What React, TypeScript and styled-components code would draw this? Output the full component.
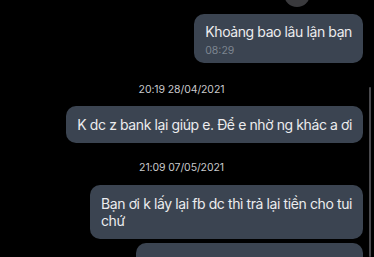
import styled, { createGlobalStyle } from 'styled-components'

const GlobalStyle = createGlobalStyle`
  html, body {
    margin: 0;
    padding: 0;
    background: #000;
    overflow: hidden;
  }
  body {
    font-family: Inter, "Liberation Sans", sans-serif;
    -webkit-font-smoothing: antialiased;
  }
`

type Item =
  | { kind: 'stamp'; text: string; gap: number }
  | { kind: 'msg'; text: string; time?: string; gap: number; width?: number }

const items: Item[] = [
  { kind: 'msg', text: 'Khoảng bao lâu lận bạn', time: '08:29', gap: 14 },
  { kind: 'stamp', text: '20:19 28/04/2021', gap: 20 },
  { kind: 'msg', text: 'K dc z bank lại giúp e. Để e nhờ ng khác a ơi', gap: 10 },
  { kind: 'stamp', text: '21:09 07/05/2021', gap: 18 },
  { kind: 'msg', text: 'Bạn ơi k lấy lại fb dc thì trả lại tiền cho tui\nchứ', gap: 11 },
  // next message starts at the bottom edge, only its top shows
  { kind: 'msg', text: '', gap: 4, width: 227 },
]

export default function App() {
  return (
    <>
      <GlobalStyle />
      <Screen>
        <Thread>
          {items.map((item, i) =>
            item.kind === 'stamp' ? (
              <Stamp key={i} $gap={item.gap}>{item.text}</Stamp>
            ) : (
              <Bubble key={i} $gap={item.gap} $width={item.width} $hasTime={!!item.time}>
                {i === 0 && (
                  <Reaction>
                    <svg width="12" height="11" viewBox="0 0 24 22" fill="none">
                      <path
                        d="M12 20.5 3.2 11.8A5.4 5.4 0 0 1 12 4.6a5.4 5.4 0 0 1 8.8 7.2Z"
                        stroke="#e6e6e6"
                        strokeWidth="2.6"
                        strokeLinejoin="round"
                      />
                    </svg>
                  </Reaction>
                )}
                {item.text ? <BubbleText>{item.text}</BubbleText> : <Spacer />}
                {item.time && <Time>{item.time}</Time>}
              </Bubble>
            )
          )}
        </Thread>
        <ScrollBar />
      </Screen>
    </>
  )
}

const Screen = styled.div`
  position: relative;
  width: 374px;
  height: 257px;
  overflow: hidden;
  background: #000;
`

const Thread = styled.div`
  display: flex;
  flex-direction: column;
  align-items: flex-end;
  padding-right: 11px;
`

const Stamp = styled.div<{ $gap: number }>`
  align-self: center;
  margin-top: ${(p) => p.$gap}px;
  font-size: 10.5px;
  line-height: 13px;
  letter-spacing: -0.1px;
  color: #c9c9cc;
`

const Bubble = styled.div<{ $gap: number; $width?: number; $hasTime: boolean }>`
  position: relative;
  margin-top: ${(p) => p.$gap}px;
  ${(p) => (p.$width ? `width: ${p.$width}px;` : '')}
  box-sizing: border-box;
  padding: ${(p) => (p.$hasTime ? '9px 11px 6px' : '10px 11px')};
  background: #3b4451;
  border-radius: 10px;
`

const BubbleText = styled.div`
  font-size: 14px;
  line-height: 17px;
  letter-spacing: -0.4px;
  color: #ececee;
  white-space: pre;
`

const Spacer = styled.div`
  height: 34px;
`

const Time = styled.div`
  margin-top: 5px;
  font-size: 10.5px;
  line-height: 12px;
  color: #7d8590;
`

const Reaction = styled.div`
  position: absolute;
  left: 90px;
  top: -33px;
  width: 26px;
  height: 26px;
  border-radius: 50%;
  background: #3a3a3d;
  display: flex;
  align-items: center;
  justify-content: center;
`

const ScrollBar = styled.div`
  position: absolute;
  right: 3px;
  top: 87px;
  bottom: 0;
  width: 2px;
  border-radius: 1px;
  background: #4a4a4e;
`
